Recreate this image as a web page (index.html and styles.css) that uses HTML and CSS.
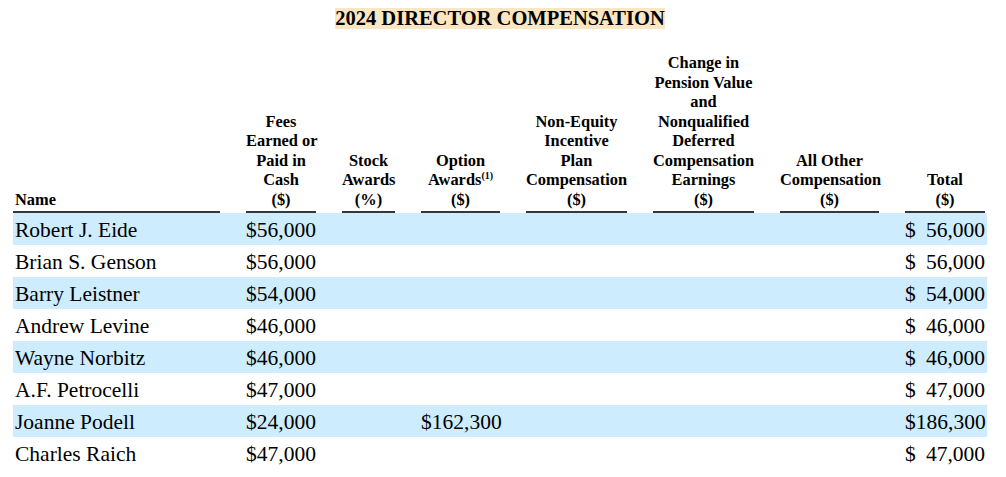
FILE: index.html
```html
<!DOCTYPE html>
<html>
<head>
<meta charset="utf-8">
<link rel="stylesheet" href="styles.css">
</head>
<body>
<div class="page">
  <div class="title-wrap"><span class="title">2024 DIRECTOR COMPENSATION</span></div>
  <table class="comp">
    <colgroup>
      <col class="c-name"><col class="c-fees"><col class="c-stock"><col class="c-option"><col class="c-nonequity"><col class="c-pension"><col class="c-other"><col class="c-total">
    </colgroup>
    <thead>
      <tr>
        <th class="first"><div class="hd left">Name</div></th>
        <th><div class="hd">Fees<br>Earned or<br>Paid in<br>Cash<br>($)</div></th>
        <th><div class="hd">Stock<br>Awards<br>(%)</div></th>
        <th><div class="hd">Option<br>Awards<sup>(1)</sup><br>($)</div></th>
        <th><div class="hd">Non-Equity<br>Incentive<br>Plan<br>Compensation<br>($)</div></th>
        <th><div class="hd">Change in<br>Pension Value<br>and<br>Nonqualified<br>Deferred<br>Compensation<br>Earnings<br>($)</div></th>
        <th><div class="hd">All Other<br>Compensation<br>($)</div></th>
        <th class="last"><div class="hd">Total<br>($)</div></th>
      </tr>
    </thead>
    <tbody>
      <tr class="alt"><td class="first name">Robert J. Eide</td><td>$56,000</td><td></td><td></td><td></td><td></td><td></td><td class="last"><div class="money"><span>$</span><span>56,000</span></div></td></tr>
      <tr><td class="first name">Brian S. Genson</td><td>$56,000</td><td></td><td></td><td></td><td></td><td></td><td class="last"><div class="money"><span>$</span><span>56,000</span></div></td></tr>
      <tr class="alt"><td class="first name">Barry Leistner</td><td>$54,000</td><td></td><td></td><td></td><td></td><td></td><td class="last"><div class="money"><span>$</span><span>54,000</span></div></td></tr>
      <tr><td class="first name">Andrew Levine</td><td>$46,000</td><td></td><td></td><td></td><td></td><td></td><td class="last"><div class="money"><span>$</span><span>46,000</span></div></td></tr>
      <tr class="alt"><td class="first name">Wayne Norbitz</td><td>$46,000</td><td></td><td></td><td></td><td></td><td></td><td class="last"><div class="money"><span>$</span><span>46,000</span></div></td></tr>
      <tr><td class="first name">A.F. Petrocelli</td><td>$47,000</td><td></td><td></td><td></td><td></td><td></td><td class="last"><div class="money"><span>$</span><span>47,000</span></div></td></tr>
      <tr class="alt"><td class="first name">Joanne Podell</td><td>$24,000</td><td></td><td>$162,300</td><td></td><td></td><td></td><td class="last"><div class="money"><span>$</span><span>186,300</span></div></td></tr>
      <tr><td class="first name">Charles Raich</td><td>$47,000</td><td></td><td></td><td></td><td></td><td></td><td class="last"><div class="money"><span>$</span><span>47,000</span></div></td></tr>
    </tbody>
  </table>
</div>
</body>
</html>
```

FILE: styles.css
```css
html, body {
  margin: 0;
  padding: 0;
  background: #ffffff;
}

body {
  font-family: "Liberation Serif", "Times New Roman", serif;
  color: #000000;
}

.page {
  padding: 8px 0 0 13px;
  width: 974px;
}

.title-wrap {
  text-align: center;
  height: 21px;
  margin-bottom: 24px;
}

.title {
  display: inline-block;
  background: #fbe6c2;
  font-weight: bold;
  font-size: 20.5px;
  line-height: 21px;
  height: 21px;
  vertical-align: top;
}

.comp {
  border-collapse: collapse;
  border-spacing: 0;
  table-layout: fixed;
  width: 974px;
}

.c-name { width: 207px; }
.c-fees { width: 96px; }
.c-stock { width: 79px; }
.c-option { width: 105px; }
.c-nonequity { width: 127px; }
.c-pension { width: 127px; }
.c-other { width: 125px; }
.c-total { width: 108px; }

.comp th,
.comp td {
  padding: 0 0 0 26px;
}

.comp th.first,
.comp td.first {
  padding-left: 0;
}

.comp th.last,
.comp td.last {
  padding-right: 2px;
}

.comp th {
  vertical-align: bottom;
  font-weight: bold;
  font-size: 16.4px;
  line-height: 19.5px;
}

.hd {
  text-align: center;
  white-space: nowrap;
  border-bottom: 2px solid #363636;
  padding-bottom: 2px;
}

.hd.left {
  text-align: left;
  padding-left: 2px;
}

.hd sup {
  font-size: 10px;
  line-height: 0;
  vertical-align: 6px;
}

.comp td {
  height: 32px;
  font-size: 21.5px;
  line-height: 30px;
  padding-top: 2px;
  white-space: nowrap;
  vertical-align: top;
  box-sizing: border-box;
}

.comp td.name {
  padding-left: 2px;
}

.comp tr.alt td {
  background: #cdecfe;
}

.money {
  display: flex;
  justify-content: space-between;
}
```
